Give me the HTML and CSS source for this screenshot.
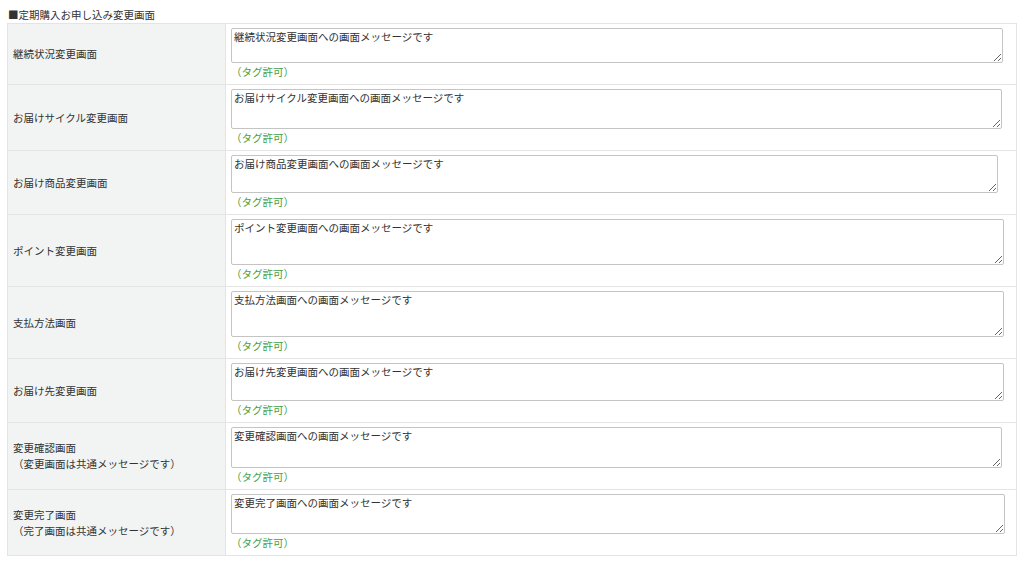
FILE: index.html
```html
<!DOCTYPE html>
<html lang="ja">
<head>
<meta charset="utf-8">
<link rel="stylesheet" href="styles.css">
</head>
<body>
<div class="page">
  <div class="title">■定期購入お申し込み変更画面</div>
  <table class="form">
    <tr>
      <th>継続状況変更画面</th>
      <td><textarea class="ta ta1">継続状況変更画面への画面メッセージです</textarea><div class="note">（タグ許可）</div></td>
    </tr>
    <tr>
      <th>お届けサイクル変更画面</th>
      <td><textarea class="ta ta2">お届けサイクル変更画面への画面メッセージです</textarea><div class="note">（タグ許可）</div></td>
    </tr>
    <tr>
      <th>お届け商品変更画面</th>
      <td><textarea class="ta ta3">お届け商品変更画面への画面メッセージです</textarea><div class="note">（タグ許可）</div></td>
    </tr>
    <tr>
      <th>ポイント変更画面</th>
      <td><textarea class="ta ta4">ポイント変更画面への画面メッセージです</textarea><div class="note">（タグ許可）</div></td>
    </tr>
    <tr>
      <th>支払方法画面</th>
      <td><textarea class="ta ta5">支払方法画面への画面メッセージです</textarea><div class="note">（タグ許可）</div></td>
    </tr>
    <tr>
      <th>お届け先変更画面</th>
      <td><textarea class="ta ta6">お届け先変更画面への画面メッセージです</textarea><div class="note">（タグ許可）</div></td>
    </tr>
    <tr>
      <th>変更確認画面<br>（変更画面は共通メッセージです）</th>
      <td><textarea class="ta ta7">変更確認画面への画面メッセージです</textarea><div class="note">（タグ許可）</div></td>
    </tr>
    <tr>
      <th>変更完了画面<br>（完了画面は共通メッセージです）</th>
      <td><textarea class="ta ta8">変更完了画面への画面メッセージです</textarea><div class="note">（タグ許可）</div></td>
    </tr>
  </table>
</div>
</body>
</html>
```
FILE: styles.css
```css
html, body {
  margin: 0;
  padding: 0;
  background: #ffffff;
}
body {
  font-family: "Noto Sans CJK JP", "Noto Sans", sans-serif;
  font-size: 10.5px;
  color: #333333;
}
.page {
  padding: 7px 7px 0 7px;
}
.title {
  line-height: 16px;
  padding-left: 1px;
}
.form {
  border-collapse: collapse;
  width: 1010px;
  table-layout: fixed;
}
.form th,
.form td {
  border: 1px solid #e4e4e4;
}
.form th {
  width: 207px;
  background: #f2f3f3;
  text-align: left;
  font-weight: normal;
  padding: 0 5px;
  line-height: 16px;
  vertical-align: middle;
}
.form td {
  padding: 4px 5px 3px 5px;
  vertical-align: top;
}
.ta {
  display: block;
  box-sizing: border-box;
  margin: 0;
  font-family: "Noto Sans CJK JP", "Noto Sans", sans-serif;
  font-size: 10.5px;
  line-height: 14px;
  color: #333333;
  padding: 1px 2px;
  border: 1px solid #c4c4c4;
  border-radius: 2px;
  background: #ffffff;
}
.ta1 { width: 772px; height: 35px; }
.ta2 { width: 771px; height: 40px; }
.ta3 { width: 767px; height: 38px; }
.ta4 { width: 773px; height: 46px; }
.ta5 { width: 773px; height: 46px; }
.ta6 { width: 773px; height: 38px; }
.ta7 { width: 771px; height: 41px; }
.ta8 { width: 774px; height: 40px; }
.note {
  line-height: 18px;
  color: #45a045;
  padding-left: 0;
}
```
